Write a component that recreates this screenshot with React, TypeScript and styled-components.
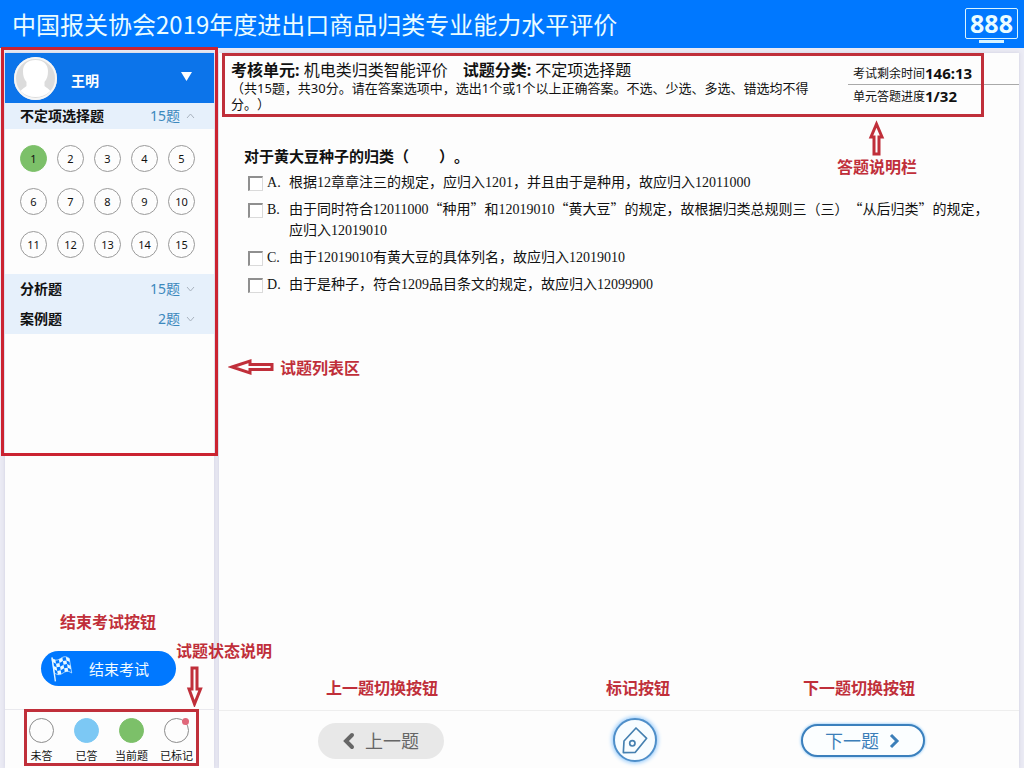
import React, { useState } from "react";
import styled, { createGlobalStyle, css } from "styled-components";

const sans = `"Noto Sans", "Noto Sans CJK SC", sans-serif`;
const cjk = `"Noto Sans CJK SC", sans-serif`;
const serif = `"Liberation Serif", "Noto Sans CJK SC", serif`;
const red = "#c02f3a";

const GlobalStyle = createGlobalStyle`
  * { box-sizing: border-box; }
  body { margin: 0; background: #ebebf4; font-family: ${sans}; color: #111; text-spacing-trim: space-all; }
  button { font-family: inherit; color: inherit; border: 0; padding: 0; background: none; cursor: pointer; }
  h1, h2, p, ul, ol, dl, dd { margin: 0; padding: 0; }
  ul, ol { list-style: none; }
`;

const Page = styled.div`
  min-height: 100vh;
  display: flex;
  flex-direction: column;
`;

const TopBar = styled.header`
  height: 48px;
  flex: none;
  display: flex;
  align-items: center;
  justify-content: space-between;
  padding: 0 6px 0 12px;
  background: #0078ff;
  color: #eafcff;
`;

const Title = styled.h1`
  font-size: 24px;
  line-height: 48px;
  font-weight: 400;
  font-family: ${cjk};
  white-space: nowrap;
`;

const Seat = styled.div`
  display: flex;
  flex-direction: column;
  align-items: center;
  gap: 1px;
  padding-top: 2px;
`;

const SeatScreen = styled.div`
  width: 53px;
  height: 31px;
  border: 1px solid #d8f4ff;
  border-radius: 2px;
  font-size: 25px;
  line-height: 28px;
  font-weight: 700;
  text-align: center;
`;

const SeatStand = styled.div`
  width: 25px;
  height: 3px;
  background: #d8f4ff;
`;

const Workspace = styled.div`
  flex: 1;
  display: flex;
  gap: 5px;
  padding: 5px 5px 0;
`;

const Sidebar = styled.aside`
  position: relative;
  width: 209px;
  flex: none;
  display: flex;
  flex-direction: column;
  background: #fdfdfd;
  box-shadow: 0 0 4px #cfcfe2;
`;

const Frame = styled.div`
  position: absolute;
  border: 3px solid ${red};
  pointer-events: none;
`;

const ListFrame = styled(Frame)`
  top: -6px;
  left: -4px;
  right: -4px;
  height: 409px;
  z-index: 1;
  border-color: #cb2331;
`;

const UserBar = styled.button`
  height: 50px;
  display: flex;
  align-items: center;
  padding: 0 22px 0 9px;
  background: #0c74ea;
  color: #fff;
`;

const UserName = styled.span`
  flex: 1;
  padding: 5px 0 0 14px;
  font-size: 14px;
  line-height: 20px;
  font-weight: 700;
  text-align: left;
`;

const SectionHeader = styled.button<{ $tall?: boolean }>`
  width: 100%;
  height: ${(p) => (p.$tall ? 30 : 26)}px;
  display: flex;
  align-items: center;
  gap: 6px;
  padding: 0 19px 0 15px;
  background: #e6f0fb;
  font-size: 14px;
  line-height: 20px;
`;

const SectionName = styled.span`
  flex: 1;
  font-weight: 700;
  text-align: left;
`;

const SectionCount = styled.span`
  color: #3c88bd;
`;

const NumberGrid = styled.ol`
  display: grid;
  grid-template-columns: repeat(5, 27px);
  gap: 16px 10px;
  padding: 16px 15px;
`;

const NumberButton = styled.button<{ $current: boolean }>`
  display: block;
  width: 27px;
  height: 27px;
  border: 1px solid ${(p) => (p.$current ? "#7cc069" : "#9a9a9a")};
  border-radius: 50%;
  background: ${(p) => (p.$current ? "#7cc069" : "#fdfdfd")};
  font-size: 11px;
  line-height: 25px;
  text-align: center;
`;

const Finish = styled.div`
  position: relative;
  width: 135px;
  margin: auto auto 23px 36px;
`;

const FinishButton = styled.button`
  width: 100%;
  height: 35px;
  display: flex;
  align-items: center;
  gap: 16px;
  padding: 0 10px;
  border-radius: 18px;
  background: #0078ff;
  color: #f2fbff;
  font-size: 15px;
  line-height: 20px;
`;

const Legend = styled.ul`
  position: relative;
  height: 59px;
  display: grid;
  grid-template-columns: repeat(4, 45px);
  padding: 8px 0 0 14px;
  border-top: 1px solid #e9e9ee;
`;

const LegendFrame = styled(Frame)`
  top: -1px;
  left: 19px;
  right: 15px;
  bottom: 2px;
`;

const LegendItem = styled.li`
  display: flex;
  flex-direction: column;
  align-items: center;
  gap: 5px;
  font-size: 11px;
  line-height: 16px;
`;

const Dot = styled.span<{ $fill?: string; $flagged?: boolean }>`
  position: relative;
  width: 25px;
  height: 25px;
  border: 1px solid ${(p) => p.$fill || "#8c8c8c"};
  border-radius: 50%;
  background: ${(p) => p.$fill || "#fdfdfd"};
  ${(p) =>
    p.$flagged &&
    css`
      &::after {
        content: "";
        position: absolute;
        top: -1px;
        right: -1px;
        width: 7px;
        height: 7px;
        border-radius: 50%;
        background: #e0677a;
      }
    `}
`;

const Main = styled.main`
  flex: 1;
  min-width: 0;
  display: flex;
  flex-direction: column;
  background: #fdfdfd;
  box-shadow: 0 0 4px #cfcfe2;
`;

const InfoBar = styled.section`
  position: relative;
  display: flex;
  justify-content: space-between;
  min-height: 64px;
  padding-left: 12px;
`;

const InfoFrame = styled(Frame)`
  top: 0;
  left: 3px;
  right: 35px;
  bottom: 0;
`;

const Unit = styled.div`
  flex: 0 1 586px;
  padding-top: 7px;
`;

const UnitLine = styled.p`
  display: flex;
  gap: 15px;
  font-size: 16px;
  line-height: 20px;
`;

const Instructions = styled.p`
  font-size: 13px;
  line-height: 16px;
`;

const Progress = styled.dl`
  width: 171px;
  padding-top: 8px;
`;

const ProgressRow = styled.div`
  display: flex;
  align-items: center;
  height: 23px;
  padding-left: 5px;
  font-size: 12px;
  & + & {
    border-top: 1px solid #a9a9a9;
  }
  dd {
    font-size: 15px;
    font-weight: 700;
  }
`;

const Question = styled.fieldset`
  position: relative;
  flex: 1;
  min-width: 0;
  margin: 0;
  padding: 29px 30px 0 25px;
  border: 0;
`;

const Stem = styled.legend`
  float: left;
  width: 100%;
  padding: 0;
  margin-bottom: 6px;
  font-size: 15px;
  line-height: 20px;
  font-weight: 700;
`;

const Options = styled.div`
  clear: both;
  display: flex;
  flex-direction: column;
  gap: 6px;
  padding-left: 4px;
  font-family: ${serif};
  font-size: 14px;
  line-height: 21px;
`;

const Option = styled.label`
  display: grid;
  grid-template-columns: 19px 22px 1fr;
  align-items: start;
`;

const Tick = styled.input`
  appearance: none;
  width: 15px;
  height: 15px;
  margin: 4px 0 0;
  border: 1px solid #dadada;
  border-top: 2px solid #8f8f8f;
  border-left: 2px solid #8f8f8f;
  background: #fff;
  &:checked {
    background: #0078ff;
  }
`;

const Quote = styled.span`
  font-family: ${cjk};
  line-height: 1;
`;

const Note = styled.span`
  color: ${red};
  font-family: ${cjk};
  font-size: 16px;
  line-height: 20px;
  font-weight: 700;
  white-space: nowrap;
`;

const InfoNote = styled.div`
  position: absolute;
  top: 3px;
  right: 102px;
  display: flex;
  flex-direction: column;
  align-items: center;
`;

const ListNote = styled.div`
  position: absolute;
  top: 304px;
  left: 223px;
  display: flex;
  align-items: center;
  gap: 6px;
`;

const FinishNote = styled.div`
  position: absolute;
  bottom: 55px;
  left: 19px;
  display: flex;
`;

const LegendNote = styled.div`
  position: absolute;
  bottom: 61px;
  left: 171px;
  z-index: 1;
  display: flex;
  flex-direction: column;
  gap: 6px;
  svg {
    margin-left: 10px;
  }
`;

const Pager = styled.nav`
  height: 58px;
  display: grid;
  grid-template-columns: 126px 1fr 124px;
  padding: 0 94px 0 99px;
  border-top: 1px solid #eeeeee;
`;

const PagerCell = styled.div<{ $shift?: boolean }>`
  position: relative;
  display: flex;
  align-items: center;
  justify-content: center;
  padding: ${(p) => (p.$shift ? "0 0 0 24px" : "2px 0 0")};
`;

const PagerNote = styled.div<{ $left: number }>`
  position: absolute;
  bottom: 71px;
  left: ${(p) => p.$left}px;
  display: flex;
`;

const PillButton = styled.button<{ $primary?: boolean }>`
  width: 100%;
  height: 36px;
  display: flex;
  align-items: center;
  justify-content: center;
  gap: 10px;
  border-radius: 18px;
  font-size: 18px;
  line-height: 24px;
  ${(p) =>
    p.$primary
      ? css`
          height: 33px;
          border: 2px solid #3b80bd;
          background: #fbfeff;
          color: #3c7fb9;
          box-shadow: 0 0 3px #6cb8f5;
        `
      : css`
          background: #e8e8e8;
          color: #666;
        `}
`;

const MarkButton = styled.button`
  width: 44px;
  height: 44px;
  display: flex;
  align-items: center;
  justify-content: center;
  border: 2px solid #4f8fc9;
  border-radius: 50%;
  background: #f8fdff;
  color: #4580b0;
  box-shadow: 0 0 4px 1px #8cc6fb;
`;

function Avatar() {
  return (
    <svg width="43" height="43" viewBox="0 0 43 43" aria-hidden="true">
      <circle cx="21.5" cy="21.5" r="21.5" fill="#dcdcdc" />
      <path
        d="M21.500 3c-8 0-12.500 4.500-12.500 11 0 5 1 8 3.500 11v4c-2 2-4 2.500-6 5A21.500 21.500 0 0 0 36.500 34c-2-2.500-4-3-6-5v-4c2.500-3 3.500-6 3.500-11C34 7.500 29.500 3 21.500 3z"
        fill="#fff"
      />
      <circle cx="21.5" cy="21.5" r="20.5" fill="none" stroke="#f6f6f6" strokeWidth="2" />
    </svg>
  );
}

function Caret() {
  return (
    <svg width="11" height="13" viewBox="0 0 11 13" aria-hidden="true">
      <path d="M0 0H11L5.500 9z" fill="#fff" />
    </svg>
  );
}

function Fold({ open }: { open?: boolean }) {
  return (
    <svg width="9" height="6" viewBox="0 0 9 6" fill="none" stroke="#a9b3bf" aria-hidden="true">
      <path d={open ? "M1 5L4.500 1L8 5" : "M1 1L4.500 5L8 1"} />
    </svg>
  );
}

function flagPoint(u: number, v: number) {
  const x = 2 + u * 50 + v * 7;
  const y = 7 + v * 42 + 5 * Math.sin(u * Math.PI * 2);
  return `${x},${y}`;
}

function FlagIcon() {
  const cells: string[] = [];
  for (let c = 0; c < 5; c++) {
    for (let r = 0; r < 4; r++) {
      if ((c + r) % 2 === 0) {
        cells.push(
          [
            flagPoint(c / 5, r / 4),
            flagPoint((c + 1) / 5, r / 4),
            flagPoint((c + 1) / 5, (r + 1) / 4),
            flagPoint(c / 5, (r + 1) / 4),
          ].join(" ")
        );
      }
    }
  }
  const edge: string[] = [];
  for (let i = 0; i <= 10; i++) edge.push(flagPoint(i / 10, 0));
  for (let i = 10; i >= 0; i--) edge.push(flagPoint(i / 10, 1));
  return (
    <svg width="22" height="26" viewBox="0 0 62 75" aria-hidden="true">
      <path d="M2 4L12 73" stroke="#e4f6ff" strokeWidth="4" />
      <polygon points={edge.join(" ")} fill="none" stroke="#e4f6ff" strokeWidth="2" />
      {cells.map((points) => (
        <polygon key={points} points={points} fill="#eafaff" />
      ))}
    </svg>
  );
}

function Chevron({ left }: { left?: boolean }) {
  return (
    <svg
      width="12"
      height="18"
      viewBox="0 0 12 18"
      fill="none"
      stroke="currentColor"
      strokeWidth={left ? 4 : 3}
      strokeLinecap={left ? "round" : "butt"}
      aria-hidden="true"
    >
      <path d={left ? "M9 3L3 9L9 15" : "M2 3L8 9L2 15"} />
    </svg>
  );
}

function PenIcon() {
  return (
    <svg
      width="30"
      height="30"
      viewBox="0 0 90 90"
      fill="none"
      stroke="currentColor"
      strokeWidth="5"
      strokeLinejoin="round"
      aria-hidden="true"
    >
      <path d="M10 83L12 48L48 9L80 40L46 82z" />
      <circle cx="37" cy="55" r="8" />
    </svg>
  );
}

type Direction = "up" | "down" | "left";

function Arrow({ to }: { to: Direction }) {
  const shapes: Record<Direction, { w: number; h: number; d: string }> = {
    up: { w: 17, h: 36, d: "M8.500 4L14 17H11V34H6V17H3z" },
    down: { w: 17, h: 41, d: "M6 2H11V23H14.500L8.500 38L3 23H6z" },
    left: { w: 46, h: 18, d: "M4 9L22 3V6.500H44V11.500H22V15z" },
  };
  const { w, h, d } = shapes[to];
  return (
    <svg width={w} height={h} viewBox={`0 0 ${w} ${h}`} fill="none" stroke={red} strokeWidth="3" aria-hidden="true">
      <path d={d} />
    </svg>
  );
}

/* Curly quotes take a full character cell, while digits stay in the serif face. */
function Clause({ text }: { text: string }) {
  return (
    <span>
      {text.split(/([“”])/).map((part, i) => (/[“”]/.test(part) ? <Quote key={i}>{part}</Quote> : part))}
    </span>
  );
}

function OptionText({ text }: { text: string }) {
  if (!/[“”]/.test(text)) return <span>{text}</span>;
  return (
    <span>
      {text.split(/(?<=，)/).map((clause) => (
        <Clause key={clause} text={clause} />
      ))}
    </span>
  );
}

const numbers = Array.from({ length: 15 }, (_, i) => i + 1);

const options = [
  { letter: "A", text: "根据12章章注三的规定，应归入1201，并且由于是种用，故应归入12011000" },
  {
    letter: "B",
    text: "由于同时符合12011000“种用”和12019010“黄大豆”的规定，故根据归类总规则三（三）“从后归类”的规定，应归入12019010",
  },
  { letter: "C", text: "由于12019010有黄大豆的具体列名，故应归入12019010" },
  { letter: "D", text: "由于是种子，符合1209品目条文的规定，故应归入12099900" },
];

export default function App() {
  const [current, setCurrent] = useState(1);
  return (
    <Page lang="zh-CN">
      <GlobalStyle />
      <TopBar>
        <Title>中国报关协会2019年度进出口商品归类专业能力水平评价</Title>
        <Seat>
          <SeatScreen>888</SeatScreen>
          <SeatStand />
        </Seat>
      </TopBar>
      <Workspace>
        <Sidebar>
          <UserBar>
            <Avatar />
            <UserName>王明</UserName>
            <Caret />
          </UserBar>
          <SectionHeader aria-expanded="true">
            <SectionName>不定项选择题</SectionName>
            <SectionCount>15题</SectionCount>
            <Fold open />
          </SectionHeader>
          <NumberGrid>
            {numbers.map((n) => (
              <li key={n}>
                <NumberButton $current={n === current} onClick={() => setCurrent(n)}>
                  {n}
                </NumberButton>
              </li>
            ))}
          </NumberGrid>
          <SectionHeader $tall aria-expanded="false">
            <SectionName>分析题</SectionName>
            <SectionCount>15题</SectionCount>
            <Fold />
          </SectionHeader>
          <SectionHeader $tall aria-expanded="false">
            <SectionName>案例题</SectionName>
            <SectionCount>2题</SectionCount>
            <Fold />
          </SectionHeader>
          <Finish>
            <FinishNote>
              <Note>结束考试按钮</Note>
            </FinishNote>
            <FinishButton>
              <FlagIcon />
              结束考试
            </FinishButton>
          </Finish>
          <Legend>
            <LegendItem>
              <Dot />
              未答
            </LegendItem>
            <LegendItem>
              <Dot $fill="#7cc8f4" />
              已答
            </LegendItem>
            <LegendItem>
              <Dot $fill="#7cc069" />
              当前题
            </LegendItem>
            <LegendItem>
              <Dot $flagged />
              已标记
            </LegendItem>
            <LegendFrame as="li" aria-hidden="true" />
          </Legend>
          <ListFrame />
          <ListNote>
            <Arrow to="left" />
            <Note>试题列表区</Note>
          </ListNote>
          <LegendNote>
            <Note>试题状态说明</Note>
            <Arrow to="down" />
          </LegendNote>
        </Sidebar>
        <Main>
          <InfoBar>
            <Unit>
              <UnitLine>
                <span>
                  <b>考核单元:</b> 机电类归类智能评价
                </span>
                <span>
                  <b>试题分类:</b> 不定项选择题
                </span>
              </UnitLine>
              <Instructions>
                （共15题，共30分。请在答案选项中，选出1个或1个以上正确答案。不选、少选、多选、错选均不得分。）
              </Instructions>
            </Unit>
            <Progress>
              <ProgressRow>
                <dt>考试剩余时间</dt>
                <dd>146:13</dd>
              </ProgressRow>
              <ProgressRow>
                <dt>单元答题进度</dt>
                <dd>1/32</dd>
              </ProgressRow>
            </Progress>
            <InfoFrame />
          </InfoBar>
          <Question>
            <Stem>对于黄大豆种子的归类（　　）。</Stem>
            <Options>
              {options.map((o) => (
                <Option key={o.letter}>
                  <Tick type="checkbox" name="answer" value={o.letter} />
                  <span>{o.letter}.</span>
                  <OptionText text={o.text} />
                </Option>
              ))}
            </Options>
            <InfoNote>
              <Arrow to="up" />
              <Note>答题说明栏</Note>
            </InfoNote>
          </Question>
          <Pager>
            <PagerCell>
              <PagerNote $left={8}>
                <Note>上一题切换按钮</Note>
              </PagerNote>
              <PillButton>
                <Chevron left />
                上一题
              </PillButton>
            </PagerCell>
            <PagerCell $shift>
              <PagerNote $left={162}>
                <Note>标记按钮</Note>
              </PagerNote>
              <MarkButton aria-label="标记">
                <PenIcon />
              </MarkButton>
            </PagerCell>
            <PagerCell>
              <PagerNote $left={2}>
                <Note>下一题切换按钮</Note>
              </PagerNote>
              <PillButton $primary>
                下一题
                <Chevron />
              </PillButton>
            </PagerCell>
          </Pager>
        </Main>
      </Workspace>
    </Page>
  );
}
